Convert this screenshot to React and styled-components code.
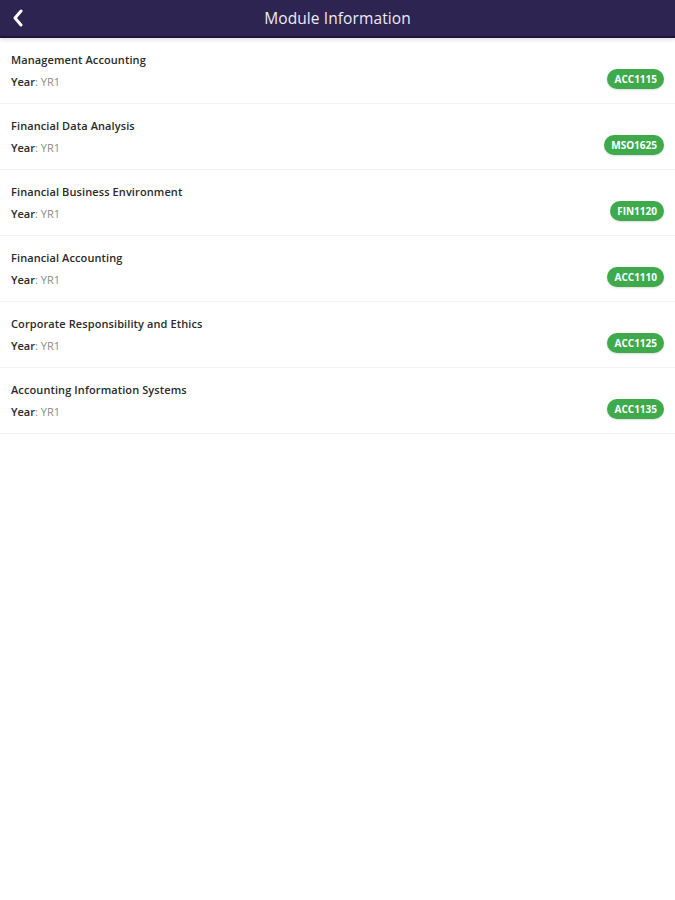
import React from "react";
import styled, { createGlobalStyle } from "styled-components";

const GlobalStyle = createGlobalStyle`
  body {
    margin: 0;
    background: #fff;
    font-family: "Open Sans", "Liberation Sans", sans-serif;
  }
`;

const Header = styled.div`
  position: relative;
  height: 36px;
  background: #2d2452;
  border-bottom: 2px solid #1c1540;
  box-shadow: 0 2px 4px rgba(0, 0, 0, 0.12);
  display: flex;
  align-items: center;
  justify-content: center;
`;

const BackButton = styled.button`
  position: absolute;
  left: 8px;
  top: 7px;
  width: 20px;
  height: 22px;
  padding: 0;
  border: none;
  background: transparent;
  display: flex;
  align-items: center;
  justify-content: center;
`;

const Title = styled.h1`
  margin: 0;
  color: #ecebf2;
  font-size: 15.5px;
  font-weight: 400;
  letter-spacing: 0.1px;
`;

const List = styled.div`
  display: flex;
  flex-direction: column;
`;

const Row = styled.div`
  display: flex;
  justify-content: space-between;
  padding: 14px 11px 13px 11px;
  border-bottom: 1px solid #f3f3f3;
`;

const Info = styled.div`
  display: flex;
  flex-direction: column;
  gap: 6px;
`;

const ModuleName = styled.div`
  font-size: 11px;
  line-height: 16px;
  font-weight: 600;
  color: #2a2a2a;
  letter-spacing: 0.1px;
`;

const Year = styled.div`
  font-size: 11px;
  line-height: 16px;
  color: #8a8a8a;

  b {
    font-weight: 600;
    color: #2a2a2a;
  }
`;

const Badge = styled.span`
  align-self: flex-end;
  margin-bottom: 1px;
  background: #3eaa4b;
  color: #fff;
  font-size: 10px;
  font-weight: 700;
  line-height: 20px;
  height: 20px;
  padding: 0 7px;
  border-radius: 10px;
  box-shadow: 0 1px 2px rgba(0, 0, 0, 0.15);
`;

const modules = [
  { name: "Management Accounting", code: "ACC1115" },
  { name: "Financial Data Analysis", code: "MSO1625" },
  { name: "Financial Business Environment", code: "FIN1120" },
  { name: "Financial Accounting", code: "ACC1110" },
  { name: "Corporate Responsibility and Ethics", code: "ACC1125" },
  { name: "Accounting Information Systems", code: "ACC1135" },
];

export default function App() {
  return (
    <>
      <GlobalStyle />
      <Header>
        <BackButton aria-label="Back">
          <svg width="14" height="18" viewBox="0 0 14 18">
            <path
              d="M10 2 L4 9 L10 16"
              fill="none"
              stroke="#fff"
              strokeWidth="3"
              strokeLinecap="round"
              strokeLinejoin="round"
            />
          </svg>
        </BackButton>
        <Title>Module Information</Title>
      </Header>
      <List>
        {modules.map((m) => (
          <Row key={m.code}>
            <Info>
              <ModuleName>{m.name}</ModuleName>
              <Year>
                <b>Year</b>: YR1
              </Year>
            </Info>
            <Badge>{m.code}</Badge>
          </Row>
        ))}
      </List>
    </>
  );
}
